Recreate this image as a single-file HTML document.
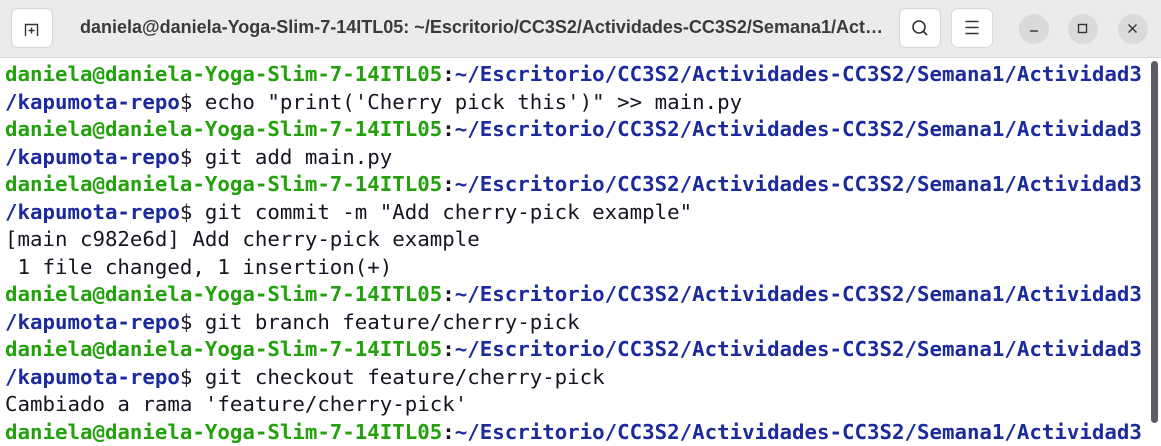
<!DOCTYPE html>
<html><head><meta charset="utf-8"><style>
body{margin:0;width:1161px;height:423px;overflow:hidden;background:#fff;font-family:"DejaVu Sans Mono",monospace;position:relative}
.tb{position:absolute;left:0;top:0;width:1161px;height:57px;background:#ebebeb;border-bottom:1px solid #d6d6d6}
.btn{position:absolute;top:8px;width:42px;height:40px;background:#fff;border:1px solid #d8d8d8;border-radius:7px;box-sizing:border-box}
.cb{position:absolute;top:14px;width:30px;height:30px;border-radius:50%;background:#dadada}
.title{position:absolute;left:80px;top:17px;font:bold 18px "Liberation Sans",sans-serif;color:#3a3a3a;white-space:nowrap}
.term{position:absolute;left:5px;top:61px;font-size:20.75px;line-height:27.5px;color:#171421;white-space:pre}
.g{color:#23a10c;font-weight:bold}.b{color:#1b2a9c;font-weight:bold}.c{font-weight:bold}
.sb{position:absolute;left:1151px;top:61px;width:7px;height:362px;background:#5e5c64;border-radius:4px}
</style></head><body>
<div class="tb">
<div class="btn" style="left:11px"><svg width="40" height="38" viewBox="0 0 40 38"><path d="M13.5 27V15.5h12V27M16.5 21.5h6M19.5 18.5v6" fill="none" stroke="#333" stroke-width="1.4"/></svg></div>
<div class="title">daniela@daniela-Yoga-Slim-7-14ITL05: ~/Escritorio/CC3S2/Actividades-CC3S2/Semana1/Act…</div>
<div class="btn" style="left:899px"><svg width="40" height="38" viewBox="0 0 40 38"><circle cx="19" cy="18" r="6" fill="none" stroke="#333" stroke-width="1.6"/><path d="M23.5 22.5l3.5 3.5" stroke="#333" stroke-width="1.6"/></svg></div>
<div class="btn" style="left:951px"><svg width="40" height="38" viewBox="0 0 40 38"><path d="M13.5 12.5h13M13.5 18.5h13M13.5 24.5h13" stroke="#333" stroke-width="1.4"/></svg></div>
<div class="cb" style="left:1019px"><svg width="30" height="30"><path d="M11 17h8" stroke="#333" stroke-width="1.4"/></svg></div>
<div class="cb" style="left:1068px"><svg width="30" height="30"><rect x="10.5" y="10.5" width="8" height="8" fill="none" stroke="#333" stroke-width="1.4"/></svg></div>
<div class="cb" style="left:1118px"><svg width="30" height="30"><path d="M10.5 10.5l8 8M18.5 10.5l-8 8" stroke="#333" stroke-width="1.4"/></svg></div>
</div>
<div class="term"><span class="g">daniela@daniela-Yoga-Slim-7-14ITL05</span><span class="c">:</span><span class="b">~/Escritorio/CC3S2/Actividades-CC3S2/Semana1/Actividad3</span>
<span class="b">/kapumota-repo</span>$ echo "print('Cherry pick this')" >> main.py
<span class="g">daniela@daniela-Yoga-Slim-7-14ITL05</span><span class="c">:</span><span class="b">~/Escritorio/CC3S2/Actividades-CC3S2/Semana1/Actividad3</span>
<span class="b">/kapumota-repo</span>$ git add main.py
<span class="g">daniela@daniela-Yoga-Slim-7-14ITL05</span><span class="c">:</span><span class="b">~/Escritorio/CC3S2/Actividades-CC3S2/Semana1/Actividad3</span>
<span class="b">/kapumota-repo</span>$ git commit -m "Add cherry-pick example"
[main c982e6d] Add cherry-pick example
 1 file changed, 1 insertion(+)
<span class="g">daniela@daniela-Yoga-Slim-7-14ITL05</span><span class="c">:</span><span class="b">~/Escritorio/CC3S2/Actividades-CC3S2/Semana1/Actividad3</span>
<span class="b">/kapumota-repo</span>$ git branch feature/cherry-pick
<span class="g">daniela@daniela-Yoga-Slim-7-14ITL05</span><span class="c">:</span><span class="b">~/Escritorio/CC3S2/Actividades-CC3S2/Semana1/Actividad3</span>
<span class="b">/kapumota-repo</span>$ git checkout feature/cherry-pick
Cambiado a rama 'feature/cherry-pick'
<span class="g">daniela@daniela-Yoga-Slim-7-14ITL05</span><span class="c">:</span><span class="b">~/Escritorio/CC3S2/Actividades-CC3S2/Semana1/Actividad3</span></div>
<div class="sb"></div>
</body></html>
